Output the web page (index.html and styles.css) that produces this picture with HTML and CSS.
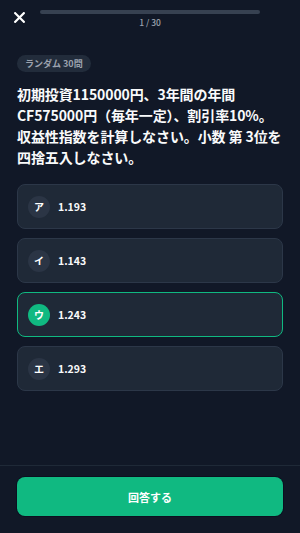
FILE: index.html
```html
<!DOCTYPE html>
<html lang="ja">
<head>
<meta charset="utf-8">
<link rel="stylesheet" href="styles.css">
</head>
<body>
<div class="app">
  <header class="topbar">
    <button class="close" aria-label="閉じる">
      <svg width="11" height="11" viewBox="0 0 11 11"><path d="M1.2 1.2 L9.8 9.8 M9.8 1.2 L1.2 9.8" stroke="#fff" stroke-width="2.2" stroke-linecap="square"/></svg>
    </button>
    <div class="progress">
      <div class="bar"></div>
      <div class="count">1 / 30</div>
    </div>
    <div class="spacer"></div>
  </header>
  <main class="content">
    <span class="badge">ランダム 30問</span>
    <p class="question">初期投資1150000円、3年間の年間<br>CF575000円（毎年一定）、割引率10%。<br>収益性指数を計算しなさい。小数 第 3位を<br>四捨五入しなさい。</p>
    <div class="options">
      <div class="option"><span class="mark">ア</span><span class="val">1.193</span></div>
      <div class="option"><span class="mark">イ</span><span class="val">1.143</span></div>
      <div class="option selected"><span class="mark">ウ</span><span class="val">1.243</span></div>
      <div class="option"><span class="mark">エ</span><span class="val">1.293</span></div>
    </div>
  </main>
  <footer class="footer">
    <button class="submit">回答する</button>
  </footer>
</div>
</body>
</html>
```
FILE: styles.css
```css
* { box-sizing: border-box; }
html, body { margin: 0; padding: 0; }
body {
  background: #111827;
  font-family: "Noto Sans CJK JP", "Noto Sans", sans-serif;
  color: #f3f4f6;
}
.app {
  height: 533px;
  display: flex;
  flex-direction: column;
}
.topbar {
  display: grid;
  grid-template-columns: 26px 1fr 26px;
  padding: 10px 14px 0;
  align-items: start;
}
.close {
  background: none;
  border: 0;
  padding: 0;
  margin-top: 2px;
  width: 11px;
  height: 11px;
  display: block;
}
.close svg { display: block; }
.progress {
  display: flex;
  flex-direction: column;
  align-items: center;
}
.bar {
  width: 100%;
  height: 4px;
  border-radius: 2px;
  background: #374151;
}
.count {
  margin-top: 2px;
  font-size: 8.5px;
  line-height: 12px;
  color: #9ca3af;
  font-weight: 500;
}
.content {
  flex: 1;
  padding: 0 17px;
  display: flex;
  flex-direction: column;
  align-items: flex-start;
}
.badge {
  margin-top: 27px;
  height: 17px;
  line-height: 17px;
  padding: 0 8px;
  border-radius: 9px;
  background: #222c3b;
  color: #9ca3af;
  font-size: 9px;
  font-weight: 700;
}
.question {
  margin: 12px 0 0;
  font-size: 14px;
  line-height: 21px;
  font-weight: 700;
  color: #f9fafb;
  white-space: nowrap;
  letter-spacing: -0.1px;
}
.options {
  margin-top: 16px;
  width: 100%;
  display: flex;
  flex-direction: column;
  gap: 9px;
}
.option {
  height: 45px;
  border: 1px solid #2c3748;
  border-radius: 8px;
  background: #1f2937;
  display: flex;
  align-items: center;
  padding-left: 10px;
  gap: 8px;
}
.option.selected {
  border-color: #10b981;
}
.mark {
  width: 22px;
  height: 22px;
  border-radius: 50%;
  background: #2b3545;
  color: #fff;
  font-size: 10px;
  font-weight: 700;
  display: flex;
  align-items: center;
  justify-content: center;
}
.selected .mark {
  background: #10b981;
}
.val {
  font-size: 10.5px;
  font-weight: 700;
  color: #f9fafb;
}
.footer {
  border-top: 1px solid #1f2937;
  padding: 11px 17px 17px;
}
.submit {
  width: 100%;
  height: 39px;
  border: 0;
  border-radius: 8px;
  background: #10b981;
  color: #fff;
  font-family: inherit;
  font-size: 11px;
  font-weight: 700;
  box-shadow: 0 0 0 1px #0b1020;
}
```
